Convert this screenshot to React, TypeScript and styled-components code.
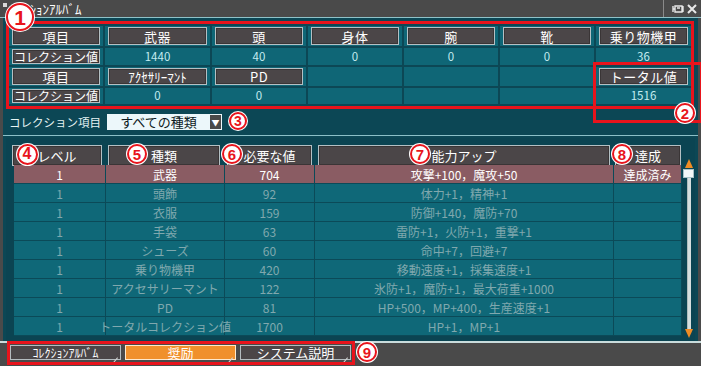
import React from 'react';
import styled, { createGlobalStyle, css } from 'styled-components';

const GlobalStyle = createGlobalStyle`
  html, body { margin: 0; padding: 0; background: #0c4755; }
  body { font-family: "Noto Sans CJK JP", "Noto Sans", sans-serif; }
  * { box-sizing: border-box; }
`;

const Window = styled.div`
  position: relative;
  width: 701px;
  height: 366px;
  display: flex;
  flex-direction: column;
  background: #0c4755;
  overflow: hidden;
`;

const TitleBar = styled.div`
  height: 18px;
  flex: none;
  background: #4a4a4a;
  border-bottom: 1px solid #8fc2c8;
  display: flex;
  align-items: center;
  padding: 0 4px 0 3px;
  color: #fff;
`;

const TitleDot = styled.span`
  width: 4px;
  height: 4px;
  background: #d8d8d8;
  align-self: flex-start;
  margin-top: 3px;
`;

const TitleText = styled.span`
  font-size: 13px;
  line-height: 17px;
  margin-left: 3px;
`;

const TitleControls = styled.div`
  margin-left: auto;
  display: flex;
  align-items: center;
  gap: 3px;
  height: 17px;
  padding-left: 8px;
  border-left: 1px solid #8a8a8a;
`;

const Main = styled.div`
  flex: 1;
  display: flex;
  flex-direction: column;
  border-left: 3px solid #4a4a4a;
  border-right: 3px solid #4a4a4a;
  padding: 8px 3px 0 6px;
  min-height: 0;
`;

const SummaryGrid = styled.div`
  display: grid;
  grid-template-columns: 94px 105px 94px 94px 94px 94px 95px;
  grid-template-rows: 20px 17px 19px 16px;
  gap: 2px;
  width: 682px;
`;

const SummaryCell = styled.div`
  background: #0f6676;
  display: flex;
  align-items: center;
  justify-content: center;
  padding: 1px 3px;
  color: #c4ecf0;
  font-size: 11.5px;
  line-height: 1;
`;

const buttonBase = css`
  background: #4b4648;
  border: 1px solid #b4c0c4;
  box-shadow: inset 0 0 0 1px #3a3536;
  color: #fff;
  display: flex;
  align-items: center;
  justify-content: center;
  white-space: nowrap;
`;

const CellButton = styled.div<{ $size: number; $spacing: number }>`
  ${buttonBase};
  width: 100%;
  height: 100%;
  font-size: ${(p) => p.$size}px;
  letter-spacing: ${(p) => p.$spacing}px;
`;

const FilterRow = styled.div`
  display: flex;
  align-items: center;
  height: 16px;
  margin-top: 10px;
`;

const FilterLabel = styled.span`
  width: 98px;
  font-size: 11.5px;
  color: #e6f4f4;
  white-space: nowrap;
`;

const SelectBox = styled.div`
  display: flex;
  align-items: center;
  height: 16px;
  width: 115px;
  background: #ecf7fa;
`;

const SelectValue = styled.span`
  flex: 1;
  text-align: center;
  font-size: 13px;
  color: #0c1a22;
  line-height: 16px;
`;

const SelectArrow = styled.span`
  width: 11px;
  height: 14px;
  margin-right: 1px;
  background: #4a4a4a;
  color: #fff;
  font-size: 8px;
  display: flex;
  align-items: center;
  justify-content: center;
`;

const Divider = styled.div`
  height: 1px;
  background: #8cc0c8;
  margin: 5px -3px 0 -6px;
`;

const TablePanel = styled.div`
  flex: 1;
  display: flex;
  margin: 2px 0 0 -3px;
  padding: 7px 3px 3px 6px;
  background: #0b4452;
  min-height: 0;
`;

const TableMain = styled.div`
  display: flex;
  flex-direction: column;
  gap: 2px;
`;

const HeaderRow = styled.div`
  display: grid;
  grid-template-columns: 94px 119px 90px 299px 68px;
  height: 18px;
`;

const HeaderButton = styled.div<{ $ml: number; $mr: number }>`
  ${buttonBase};
  font-size: 13px;
  margin-left: ${(p) => p.$ml}px;
  margin-right: ${(p) => p.$mr}px;
`;

const Rows = styled.div`
  display: flex;
  flex-direction: column;
  margin-left: 2px;
  width: 668px;
`;

const DataRow = styled.div<{ $done?: boolean }>`
  display: grid;
  grid-template-columns: 92px 119px 90px 299px 68px;
  height: 19px;
  border-bottom: 1px solid #0b4a58;
  background: ${(p) => (p.$done ? '#8a5c63' : '#0f6878')};
  color: ${(p) => (p.$done ? '#ffffff' : '#80a8ae')};
`;

const DataCell = styled.div`
  display: flex;
  align-items: center;
  justify-content: center;
  font-size: 12px;
  border-right: 1px solid #0b4a58;
  white-space: nowrap;
  min-width: 0;
`;

const ScrollBar = styled.div`
  width: 12px;
  margin-top: 14px;
  margin-left: 1px;
  display: flex;
  flex-direction: column;
  align-items: center;
`;

const ArrowUp = styled.div`
  width: 0;
  height: 0;
  border-left: 4px solid transparent;
  border-right: 4px solid transparent;
  border-bottom: 9px solid #f08c24;
`;

const ArrowDown = styled.div`
  width: 0;
  height: 0;
  border-left: 4px solid transparent;
  border-right: 4px solid transparent;
  border-top: 9px solid #f08c24;
`;

const Thumb = styled.div`
  width: 11px;
  height: 9px;
  margin-top: 1px;
  background: #f4f8f8;
  border: 1px solid #a9c2c6;
`;

const Track = styled.div`
  flex: 1;
  width: 4px;
  background: #d6dede;
  border-left: 1px solid #b0bcbc;
`;

const BottomBar = styled.div`
  height: 25px;
  flex: none;
  background: #4a4a4a;
  border-top: 2px solid #c9dcdc;
  display: flex;
  align-items: flex-start;
  padding: 2px 0 0 10px;
  gap: 4px;
`;

const Tab = styled.div<{ $active?: boolean; $size: number }>`
  position: relative;
  width: 111px;
  height: 15px;
  background: ${(p) => (p.$active ? '#f0902c' : '#4b4648')};
  border: 1px solid ${(p) => (p.$active ? '#ffe9cc' : '#b4bcc0')};
  color: #fff;
  font-size: ${(p) => p.$size}px;
  display: flex;
  align-items: center;
  justify-content: center;
  line-height: 1;
  white-space: nowrap;
  &::after {
    content: '';
    position: absolute;
    right: 2px;
    bottom: 1px;
    width: 9px;
    height: 1px;
    background: #d0d0d0;
    transform: rotate(-50deg);
    transform-origin: right bottom;
  }
`;

const Callout = styled.div<{ $l: number; $t: number; $w: number; $h: number }>`
  position: absolute;
  left: ${(p) => p.$l}px;
  top: ${(p) => p.$t}px;
  width: ${(p) => p.$w}px;
  height: ${(p) => p.$h}px;
  border: 3px solid #e8141c;
  pointer-events: none;
`;

const Marker = styled.div<{ $x: number; $y: number; $d: number }>`
  position: absolute;
  left: ${(p) => p.$x - p.$d / 2}px;
  top: ${(p) => p.$y - p.$d / 2}px;
  width: ${(p) => p.$d}px;
  height: ${(p) => p.$d}px;
  border-radius: 50%;
  background: #fff;
  display: flex;
  align-items: center;
  justify-content: center;
  &::before {
    content: '';
    position: absolute;
    inset: 1px;
    border-radius: 50%;
    border: 2px solid #e8141c;
    background: #fff;
  }
`;

const MarkerNum = styled.span<{ $d: number }>`
  position: relative;
  z-index: 1;
  color: #e8141c;
  font-family: "Liberation Sans", Arial, sans-serif;
  font-weight: bold;
  font-size: ${(p) => Math.round(p.$d * 0.7)}px;
  line-height: 1;
`;

type Cell = { kind: 'btn' | 'val' | 'empty'; text?: string; size?: number; spacing?: number };

const summary: Cell[][] = [
  [
    { kind: 'btn', text: '項目' },
    { kind: 'btn', text: '武器' },
    { kind: 'btn', text: '頭' },
    { kind: 'btn', text: '身体' },
    { kind: 'btn', text: '腕' },
    { kind: 'btn', text: '靴' },
    { kind: 'btn', text: '乗り物機甲' },
  ],
  [
    { kind: 'btn', text: 'コレクション値', size: 12, spacing: 0 },
    { kind: 'val', text: '1440' },
    { kind: 'val', text: '40' },
    { kind: 'val', text: '0' },
    { kind: 'val', text: '0' },
    { kind: 'val', text: '0' },
    { kind: 'val', text: '36' },
  ],
  [
    { kind: 'btn', text: '項目' },
    { kind: 'btn', text: 'ｱｸｾｻﾘｰﾏﾝﾄ', size: 13, spacing: 0 },
    { kind: 'btn', text: 'PD' },
    { kind: 'empty' },
    { kind: 'empty' },
    { kind: 'empty' },
    { kind: 'btn', text: 'トータル値' },
  ],
  [
    { kind: 'btn', text: 'コレクション値', size: 12, spacing: 0 },
    { kind: 'val', text: '0' },
    { kind: 'val', text: '0' },
    { kind: 'empty' },
    { kind: 'empty' },
    { kind: 'empty' },
    { kind: 'val', text: '1516' },
  ],
];

const headers = [
  { text: 'レベル', ml: 0, mr: 4 },
  { text: '種類', ml: 2, mr: 5 },
  { text: '必要な値', ml: 2, mr: 3 },
  { text: '能力アップ', ml: 3, mr: 4 },
  { text: '達成', ml: 1, mr: 1 },
];

const rows = [
  ['1', '武器', '704', '攻撃+100，魔攻+50', '達成済み'],
  ['1', '頭飾', '92', '体力+1，精神+1', ''],
  ['1', '衣服', '159', '防御+140，魔防+70', ''],
  ['1', '手袋', '63', '雷防+1，火防+1，重撃+1', ''],
  ['1', 'シューズ', '60', '命中+7，回避+7', ''],
  ['1', '乗り物機甲', '420', '移動速度+1，採集速度+1', ''],
  ['1', 'アクセサリーマント', '122', '氷防+1，魔防+1，最大荷重+1000', ''],
  ['1', 'PD', '81', 'HP+500，MP+400，生産速度+1', ''],
  ['1', 'トータルコレクション値', '1700', 'HP+1，MP+1', ''],
];

const markers = [
  { n: 1, x: 20, y: 17, d: 30 },
  { n: 2, x: 685, y: 113, d: 22 },
  { n: 3, x: 238, y: 121, d: 20 },
  { n: 4, x: 27, y: 154, d: 23 },
  { n: 5, x: 137, y: 154, d: 22 },
  { n: 6, x: 232, y: 154, d: 22 },
  { n: 7, x: 420, y: 154, d: 22 },
  { n: 8, x: 622, y: 154, d: 22 },
  { n: 9, x: 367, y: 352, d: 22 },
];

const PinIcon = () => (
  <svg width="12" height="10" viewBox="0 0 12 10">
    <path d="M1 2 L1 8 M1 5 L3 5 M3 2 H10 V8 H3 Z M5 4 L8 4 M11 2 L11 8" stroke="#e8e8e8" strokeWidth="1.4" fill="none" />
  </svg>
);

const CloseIcon = () => (
  <svg width="10" height="10" viewBox="0 0 10 10">
    <path d="M1 1 L9 9 M9 1 L1 9" stroke="#e8e8e8" strokeWidth="2" />
  </svg>
);

export default function App() {
  return (
    <Window>
      <GlobalStyle />
      <TitleBar>
        <TitleDot />
        <TitleText>ｺﾚｸｼｮﾝｱﾙﾊﾞﾑ</TitleText>
        <TitleControls>
          <PinIcon />
          <CloseIcon />
        </TitleControls>
      </TitleBar>
      <Main>
        <SummaryGrid>
          {summary.flatMap((row, r) =>
            row.map((c, i) => (
              <SummaryCell key={`${r}-${i}`}>
                {c.kind === 'btn' ? (
                  <CellButton $size={c.size ?? 13} $spacing={c.spacing ?? 0.5}>
                    {c.text}
                  </CellButton>
                ) : c.kind === 'val' ? (
                  c.text
                ) : null}
              </SummaryCell>
            ))
          )}
        </SummaryGrid>
        <FilterRow>
          <FilterLabel>コレクション項目</FilterLabel>
          <SelectBox>
            <SelectValue>すべての種類</SelectValue>
            <SelectArrow>▼</SelectArrow>
          </SelectBox>
        </FilterRow>
        <Divider />
        <TablePanel>
          <TableMain>
            <HeaderRow>
              {headers.map((h) => (
                <HeaderButton key={h.text} $ml={h.ml} $mr={h.mr}>
                  {h.text}
                </HeaderButton>
              ))}
            </HeaderRow>
            <Rows>
              {rows.map((r, i) => (
                <DataRow key={i} $done={r[4] !== ''}>
                  {r.map((c, j) => (
                    <DataCell key={j}>{c}</DataCell>
                  ))}
                </DataRow>
              ))}
            </Rows>
          </TableMain>
          <ScrollBar>
            <ArrowUp />
            <Thumb />
            <Track />
            <ArrowDown />
          </ScrollBar>
        </TablePanel>
      </Main>
      <BottomBar>
        <Tab $size={12}>ｺﾚｸｼｮﾝｱﾙﾊﾞﾑ</Tab>
        <Tab $active $size={13}>奨励</Tab>
        <Tab $size={13}>システム説明</Tab>
      </BottomBar>

      <Callout $l={6} $t={21} $w={688} $h={88} />
      <Callout $l={593} $t={62} $w={110} $h={61} />
      <Callout $l={7} $t={341} $w={348} $h={24} />
      {markers.map((m) => (
        <Marker key={m.n} $x={m.x} $y={m.y} $d={m.d}>
          <MarkerNum $d={m.d}>{m.n}</MarkerNum>
        </Marker>
      ))}
    </Window>
  );
}
